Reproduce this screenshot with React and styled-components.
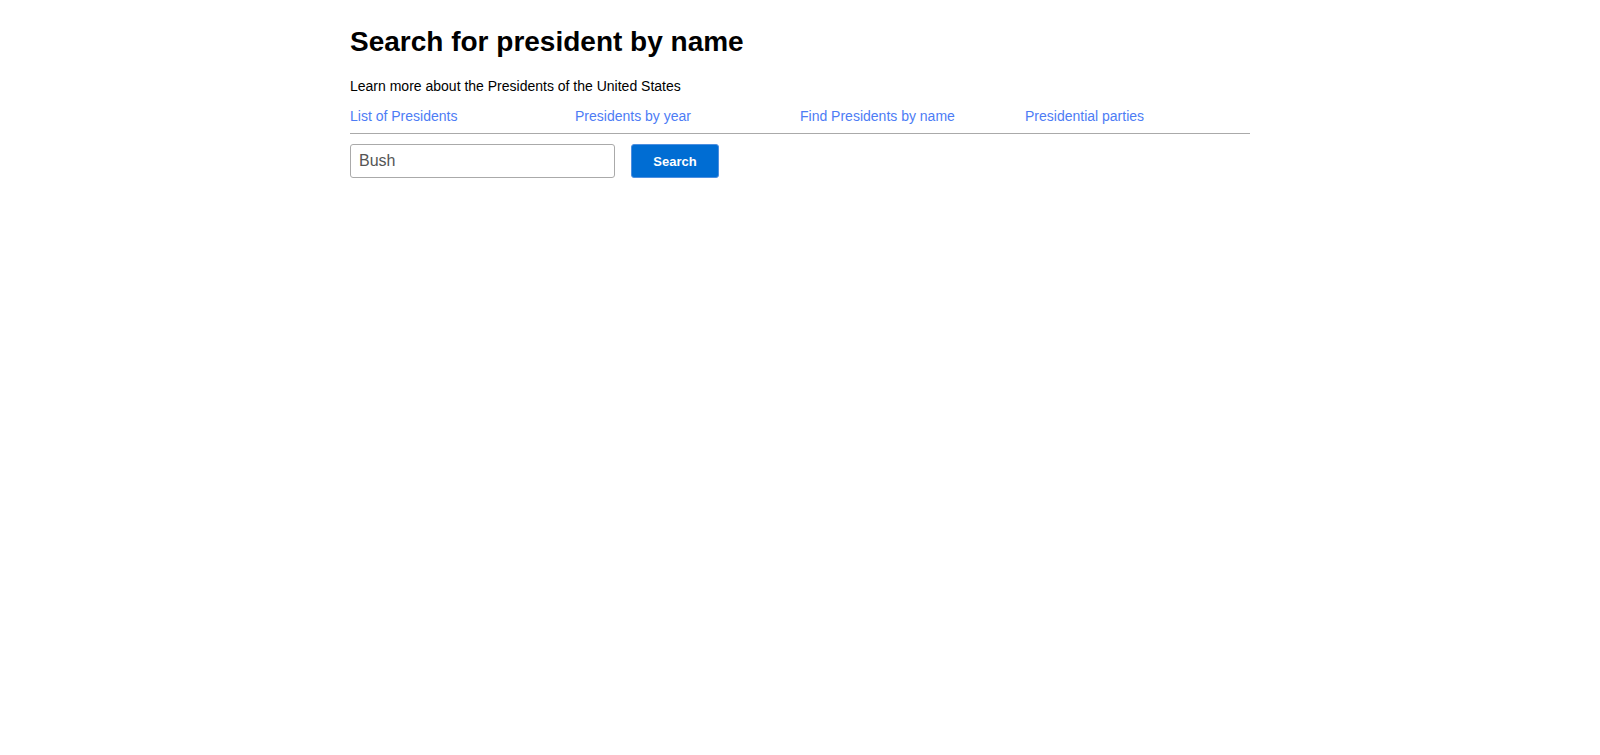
import styled, { createGlobalStyle } from "styled-components"

const GlobalStyle = createGlobalStyle`
body {
  margin: 0;
  background: #fff;
  font-family: "Liberation Sans", Arial, sans-serif;
  color: #000;
}
`

const Page = styled.div`
width: 900px;
margin: 0 auto;
padding-top: 26px;
`
const Title = styled.h1`
margin: 0;
font-size: 28px;
font-weight: bold;
line-height: 32px;
`
const Lead = styled.p`
margin: 19px 0 0;
font-size: 14px;
line-height: 18px;
`
const Nav = styled.nav`
display: grid;
grid-template-columns: repeat(4, 1fr);
margin-top: 12px;
padding-bottom: 8px;
border-bottom: 1px solid #aaa;
`
const NavLink = styled.a`
font-size: 14px;
line-height: 18px;
color: #4d7cf5;
text-decoration: none;
cursor: pointer;
`
const SearchRow = styled.form`
display: flex;
align-items: center;
gap: 16px;
margin-top: 10px;
`
const Input = styled.input`
width: 265px;
height: 34px;
box-sizing: border-box;
border: 1px solid #aaa;
border-radius: 3px;
padding: 0 8px;
font-family: "Liberation Sans", Arial, sans-serif;
font-size: 16px;
color: #555;
outline: none;
`
const Button = styled.button`
width: 88px;
height: 34px;
border: 1px solid #4d8fe0;
border-radius: 3px;
background: #006dd3;
color: #fff;
font-family: "Liberation Sans", Arial, sans-serif;
font-size: 13px;
font-weight: bold;
cursor: pointer;
`

const links = ["List of Presidents", "Presidents by year", "Find Presidents by name", "Presidential parties"]

export default function App() {
    return (
        <>
            <GlobalStyle />
            <Page>
                <Title>Search for president by name</Title>
                <Lead>Learn more about the Presidents of the United States</Lead>
                <Nav>
                    {links.map(l => <div key={l}><NavLink>{l}</NavLink></div>)}
                </Nav>
                <SearchRow onSubmit={e => e.preventDefault()}>
                    <Input defaultValue="Bush" />
                    <Button type="submit">Search</Button>
                </SearchRow>
            </Page>
        </>
    )
}
